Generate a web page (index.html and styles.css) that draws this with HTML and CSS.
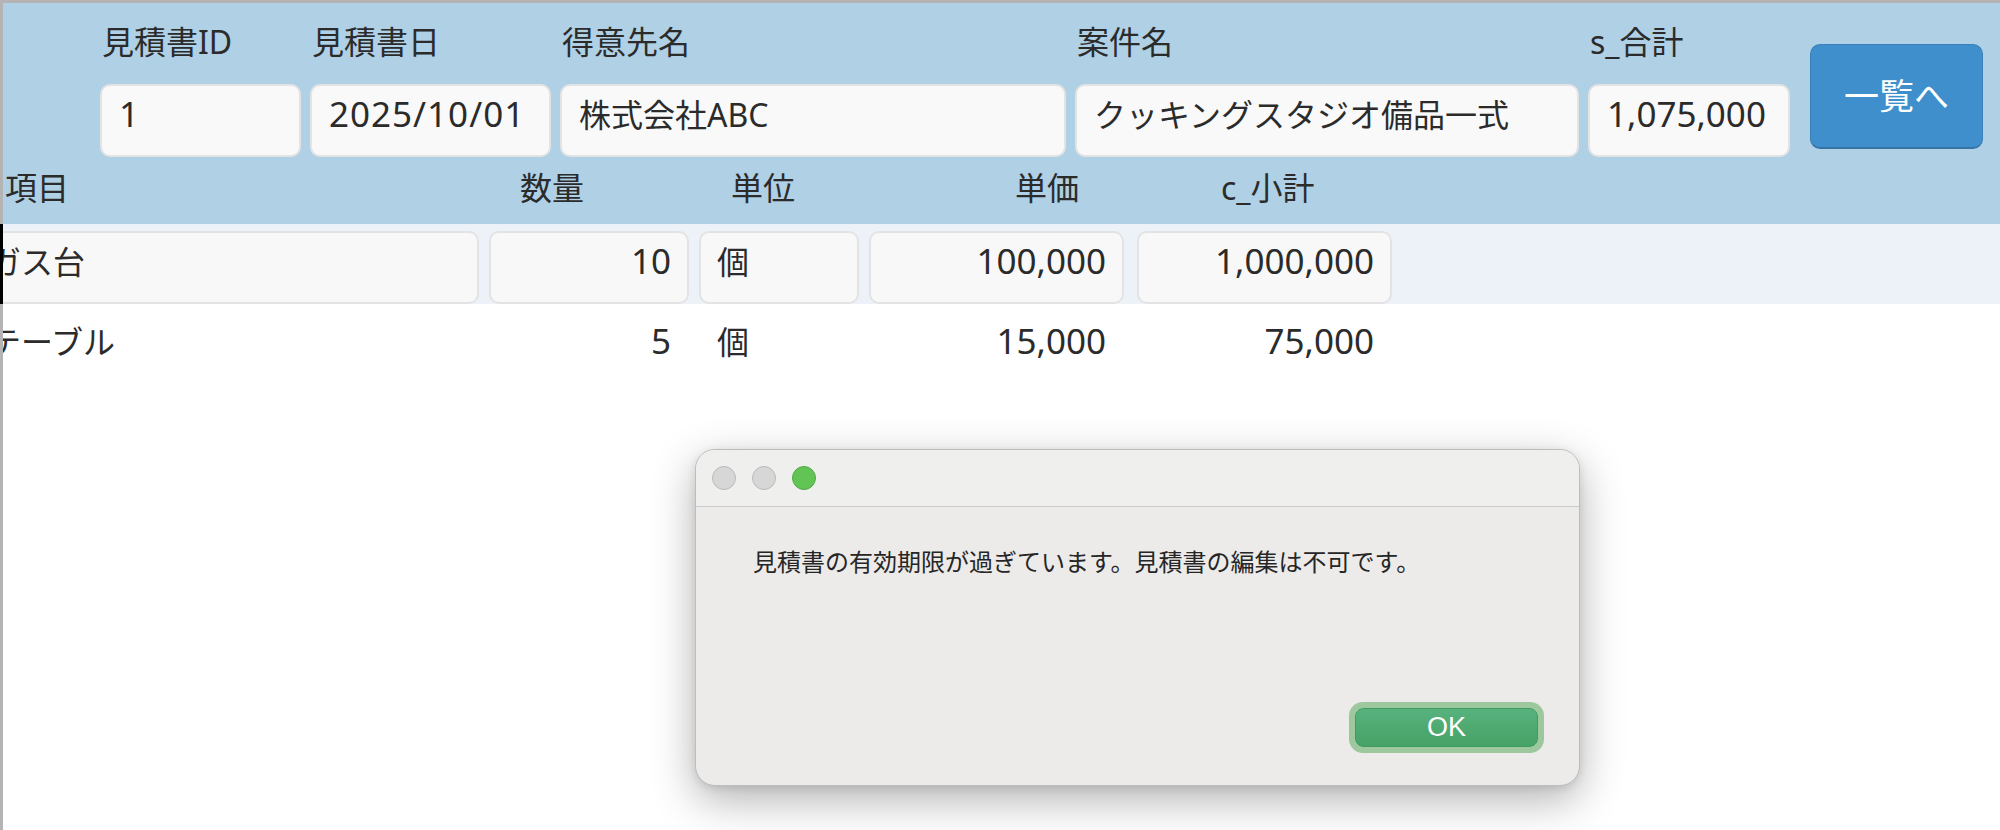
FILE: index.html
```html
<!DOCTYPE html>
<html lang="ja">
<head>
<meta charset="utf-8">
<title>見積書</title>
<link rel="stylesheet" href="styles.css">
</head>
<body>
<div class="window">
  <div class="header">
    <div class="top">
      <div class="fields">
        <div class="field f-id">
          <div class="label">見積書ID</div>
          <div class="box num">1</div>
        </div>
        <div class="field f-date">
          <div class="label">見積書日</div>
          <div class="box num date">2025/10/01</div>
        </div>
        <div class="field f-client">
          <div class="label">得意先名</div>
          <div class="box">株式会社ABC</div>
        </div>
        <div class="field f-project">
          <div class="label">案件名</div>
          <div class="box">クッキングスタジオ備品一式</div>
        </div>
        <div class="field f-total">
          <div class="label">s_合計</div>
          <div class="box num">1,075,000</div>
        </div>
      </div>
      <button class="list-btn">一覧へ</button>
    </div>
    <div class="cols">
      <div class="col">項目</div>
      <div class="col">数量</div>
      <div class="col">単位</div>
      <div class="col">単価</div>
      <div class="col">c_小計</div>
    </div>
  </div>

  <div class="row active">
    <div class="cell c-item">ガス台</div>
    <div class="cell c-qty num right">10</div>
    <div class="cell c-unit">個</div>
    <div class="cell c-price num right">100,000</div>
    <div class="cell c-sub num right">1,000,000</div>
  </div>
  <div class="row">
    <div class="cell c-item">テーブル</div>
    <div class="cell c-qty num right">5</div>
    <div class="cell c-unit">個</div>
    <div class="cell c-price num right">15,000</div>
    <div class="cell c-sub num right">75,000</div>
  </div>
  <div class="filler"></div>

  <div class="dialog">
    <div class="titlebar">
      <span class="light gray"></span>
      <span class="light gray"></span>
      <span class="light green"></span>
    </div>
    <div class="dlg-body">
      <p class="msg">見積書の有効期限が過ぎています。見積書の編集は不可です。</p>
      <div class="actions">
        <button class="ok">OK</button>
      </div>
    </div>
  </div>
</div>
</body>
</html>
```

FILE: styles.css
```css
html, body {
  margin: 0;
  padding: 0;
  background: #ffffff;
}

body {
  font-family: "Noto Sans", "Noto Sans CJK JP", sans-serif;
  color: #2b2b2b;
  font-size: 32px;
}

.window {
  position: relative;
  width: 2000px;
  height: 830px;
  box-sizing: border-box;
  border-top: 3px solid #b4b4b4;
  display: flex;
  flex-direction: column;
  overflow: hidden;
}

/* ---------- header ---------- */
.header {
  background: #afd0e5;
  border-left: 3px solid #b4b4b4;
  padding: 19px 0 16px 0;
  flex: none;
}

.top {
  display: flex;
  align-items: flex-start;
  padding-left: 97px;
}

.fields {
  display: flex;
  gap: 9px;
}

.field {
  display: flex;
  flex-direction: column;
}

.f-id { width: 201px; }
.f-date { width: 241px; }
.f-client { width: 506px; }
.f-project { width: 504px; }
.f-total { width: 202px; }

.label {
  line-height: 40px;
  height: 40px;
  padding-left: 2px;
  white-space: nowrap;
}

.box {
  margin-top: 22px;
  height: 73px;
  box-sizing: border-box;
  background: #f9f9f9;
  border: 2px solid #e3e3e3;
  border-radius: 10px;
  padding: 9px 16px 0 17px;
  line-height: 40px;
  white-space: nowrap;
  overflow: hidden;
}

.num {
  font-size: 35px;
}

.box.num {
  padding-top: 8px;
}

.box.date {
  letter-spacing: 1px;
}

.list-btn {
  margin-left: 20px;
  margin-top: 22px;
  width: 173px;
  height: 105px;
  box-sizing: border-box;
  background: #3e8fcb;
  border: 1px solid #3a80b8;
  border-bottom: 2px solid #3674a6;
  border-radius: 10px;
  color: #ffffff;
  font-family: "Noto Sans", "Noto Sans CJK JP", sans-serif;
  font-size: 35px;
  line-height: 40px;
  padding: 0;
}

.cols {
  margin-top: 11px;
  display: grid;
  grid-template-columns: 515px 211px 284px 206px auto;
  padding-left: 2px;
  line-height: 40px;
  height: 40px;
}

.col {
  white-space: nowrap;
}

/* ---------- rows ---------- */
.row {
  flex: none;
  display: flex;
  gap: 10px;
  height: 80px;
  box-sizing: border-box;
  padding-top: 7px;
  border-left: 3px solid #b4b4b4;
  overflow: hidden;
}

.row.active {
  background: #edf2f9;
  border-left-color: #000000;
}

.cell {
  flex: none;
  height: 73px;
  box-sizing: border-box;
  border: 2px solid transparent;
  border-radius: 10px;
  padding: 9px 16px 0 16px;
  line-height: 40px;
  white-space: nowrap;
  overflow: hidden;
}

.cell.num {
  padding-top: 8px;
}

.row.active .cell {
  background: #f8f8f8;
  border-color: #e3e3e3;
}

.right {
  text-align: right;
}

.c-item { width: 508px; margin-left: -32px; }
.c-qty { width: 200px; }
.c-unit { width: 160px; }
.c-price { width: 255px; }
.c-sub { width: 255px; margin-left: 3px; }

.filler {
  flex: 1;
  border-left: 3px solid #b4b4b4;
}

/* ---------- dialog ---------- */
.dialog {
  position: absolute;
  left: 695px;
  top: 446px;
  width: 885px;
  height: 337px;
  box-sizing: border-box;
  border: 1px solid #bdbdbd;
  border-radius: 20px;
  background: #ecebe9;
  display: flex;
  flex-direction: column;
  overflow: hidden;
  box-shadow: 0 14px 44px rgba(0, 0, 0, 0.30), 0 2px 8px rgba(0, 0, 0, 0.10);
}

.titlebar {
  flex: none;
  height: 56px;
  background: #efefee;
  border-bottom: 1px solid #c9c9c9;
  display: flex;
  align-items: center;
  gap: 16px;
  padding-left: 16px;
}

.light {
  width: 24px;
  height: 24px;
  box-sizing: border-box;
  border-radius: 50%;
}

.light.gray {
  background: #d7d7d7;
  border: 1px solid #b9b9b9;
}

.light.green {
  background: #62c454;
  border: 1px solid #50a944;
}

.dlg-body {
  flex: 1;
  display: flex;
  flex-direction: column;
  padding: 39px 41px 38px 57px;
}

.msg {
  margin: 0;
  font-size: 24px;
  line-height: 32px;
  color: #262626;
  white-space: nowrap;
}

.actions {
  margin-top: auto;
  display: flex;
  justify-content: flex-end;
}

.ok {
  width: 183px;
  height: 39px;
  box-sizing: border-box;
  border: 1px solid #3f9b5e;
  border-radius: 8px;
  background: linear-gradient(#58b27e, #46a265);
  box-shadow: 0 0 0 6px #9dc79c;
  color: #ffffff;
  font-family: "Liberation Sans", "Noto Sans", sans-serif;
  font-size: 27px;
  line-height: 37px;
  padding: 0;
}
```
